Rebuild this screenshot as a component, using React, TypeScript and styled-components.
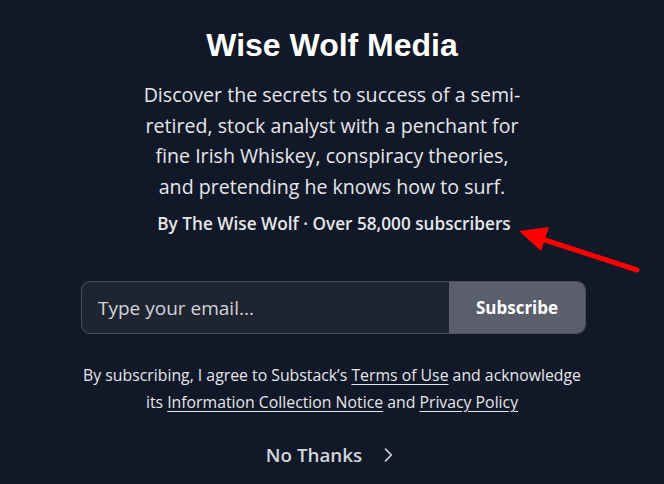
import React from "react";
import styled, { createGlobalStyle } from "styled-components";

const GlobalStyle = createGlobalStyle`
  html, body {
    margin: 0;
    padding: 0;
    background: #111827;
  }
  * { box-sizing: border-box; }
`;

const App: React.FC = () => {
  return (
    <Page>
      <GlobalStyle />
      <Title>Wise Wolf Media</Title>
      <Description>
        Discover the secrets to success of a semi-retired, stock analyst with a penchant for fine
        Irish Whiskey, conspiracy theories, and pretending he knows how to surf.
      </Description>
      <Byline>By The Wise Wolf · Over 58,000 subscribers</Byline>
      <Form onSubmit={(e) => e.preventDefault()}>
        <EmailInput type="email" placeholder="Type your email..." />
        <SubscribeButton type="submit">Subscribe</SubscribeButton>
      </Form>
      <Legal>
        By subscribing, I agree to Substack’s <LegalLink href="#">Terms of Use</LegalLink> and
        acknowledge its <LegalLink href="#">Information Collection Notice</LegalLink> and{" "}
        <LegalLink href="#">Privacy Policy</LegalLink>
      </Legal>
      <NoThanks type="button">
        No Thanks
        <svg width="20" height="20" viewBox="0 0 24 24" fill="none" stroke="currentColor" strokeWidth="2" strokeLinecap="round" strokeLinejoin="round">
          <path d="M9 5l7 7-7 7" />
        </svg>
      </NoThanks>
      <Arrow width="664" height="484" viewBox="0 0 664 484">
        <line x1="637" y1="270" x2="542" y2="239" stroke="#f00" strokeWidth="5" strokeLinecap="round" />
        <polygon points="519,231 549,227 541,251" fill="#f00" />
      </Arrow>
    </Page>
  );
};

export default App;

// ------------------ Styled Components ------------------

const Page = styled.div`
  position: relative;
  width: 664px;
  height: 484px;
  display: flex;
  flex-direction: column;
  align-items: center;
  padding-top: 26px;
  background: #111827;
  font-family: "Open Sans", "Noto Sans", sans-serif;
  color: #e5e7eb;
  overflow: hidden;
`;

const Title = styled.h1`
  margin: 0;
  font-family: "Liberation Sans", Arial, sans-serif;
  font-size: 32px;
  font-weight: 700;
  line-height: 38px;
  color: #ffffff;
`;

const Description = styled.p`
  margin: 16px 0 0;
  width: 384px;
  text-align: center;
  font-size: 19.6px;
  line-height: 30.5px;
  color: #e5e7eb;
`;

const Byline = styled.div`
  margin-top: 9px;
  margin-left: 4px;
  font-size: 17.2px;
  font-weight: 600;
  line-height: 26px;
  color: #e5e7eb;
`;

const Form = styled.form`
  margin-top: 44px;
  margin-left: 3px;
  width: 505px;
  height: 53px;
  display: flex;
  border: 1px solid #4b505c;
  border-radius: 9px;
  overflow: hidden;
  background: #1f2431;
`;

const EmailInput = styled.input`
  flex: 1;
  min-width: 0;
  border: none;
  outline: none;
  background: transparent;
  padding: 0 16px;
  font-family: inherit;
  font-size: 19px;
  color: #e5e7eb;

  &::placeholder {
    color: #d1d5db;
  }
`;

const SubscribeButton = styled.button`
  width: 136px;
  border: none;
  background: #5a5f6b;
  color: #ffffff;
  font-family: inherit;
  font-size: 17px;
  font-weight: 700;
  cursor: pointer;
`;

const Legal = styled.p`
  margin: 28px 0 0;
  width: 506px;
  text-align: center;
  font-size: 15.8px;
  line-height: 27px;
  color: #e5e7eb;
`;

const LegalLink = styled.a`
  color: inherit;
  text-decoration: underline;
  text-underline-offset: 3px;
`;

const NoThanks = styled.button`
  margin-top: 26px;
  display: flex;
  align-items: center;
  gap: 16px;
  border: none;
  background: none;
  padding: 0;
  font-family: inherit;
  font-size: 18.8px;
  font-weight: 600;
  color: #d1d5db;
  cursor: pointer;
`;

const Arrow = styled.svg`
  position: absolute;
  left: 0;
  top: 0;
  pointer-events: none;
`;
